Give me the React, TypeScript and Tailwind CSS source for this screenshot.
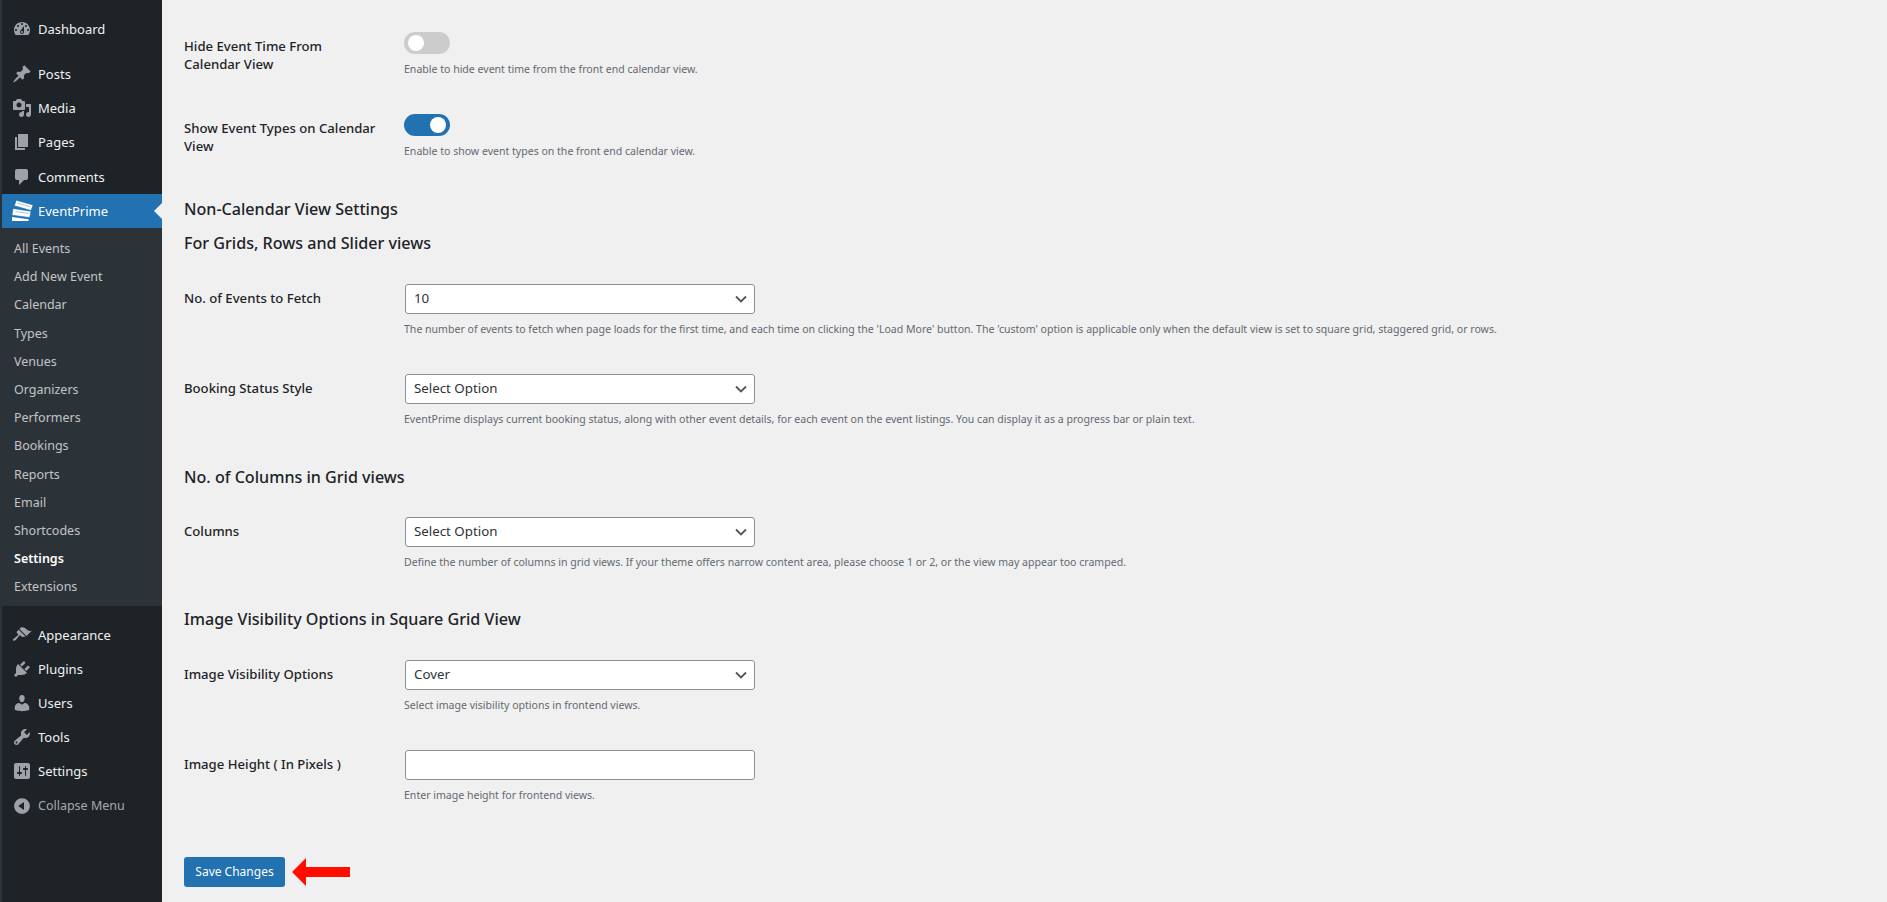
import React from "react";

const P: Record<string, string> = {
  dashboard: "M3.76 16h12.48c1.1-1.37 1.76-3.11 1.76-5 0-4.42-3.58-8-8-8s-8 3.58-8 8c0 1.89.66 3.63 1.76 5zM10 4c.55 0 1 .45 1 1s-.45 1-1 1-1-.45-1-1 .45-1 1-1zM6 6c.55 0 1 .45 1 1s-.45 1-1 1-1-.45-1-1 .45-1 1-1zm8 0c.55 0 1 .45 1 1s-.45 1-1 1-1-.45-1-1 .45-1 1-1zm-5.37 5.55L12 7v6c0 1.1-.9 2-2 2s-2-.9-2-2c0-.57.24-1.08.63-1.45zM4 10c.55 0 1 .45 1 1s-.45 1-1 1-1-.45-1-1 .45-1 1-1zm12 0c.55 0 1 .45 1 1s-.45 1-1 1-1-.45-1-1 .45-1 1-1zm-5 3c0-.55-.45-1-1-1s-1 .45-1 1 .45 1 1 1 1-.45 1-1z",
  post: "M10.44 3.02l1.82-1.82 6.36 6.35-1.83 1.82c-1.05-.68-2.48-.57-3.41.36l-.75.75c-.92.93-1.04 2.35-.35 3.41l-1.83 1.82-2.41-2.41-2.8 2.79c-.42.42-3.38 2.71-3.8 2.29s1.86-3.39 2.28-3.81l2.79-2.79L4.1 9.36l1.83-1.82c1.05.69 2.48.57 3.4-.36l.75-.75c.93-.92 1.05-2.35.36-3.41z",
  media: "M13 11V4c0-.55-.45-1-1-1h-1.67L9 1H5L3.67 3H2c-.55 0-1 .45-1 1v7c0 .55.45 1 1 1h10c.55 0 1-.45 1-1zM7 4.5c1.38 0 2.5 1.12 2.5 2.5S8.38 9.5 7 9.5 4.5 8.38 4.5 7 5.62 4.5 7 4.5zM14 6h5v10.5c0 1.38-1.12 2.5-2.5 2.5S14 17.88 14 16.5s1.12-2.5 2.5-2.5c.17 0 .34.02.5.05V9h-3V6zm-4 8.05V13h2v3.5c0 1.38-1.12 2.5-2.5 2.5S7 17.88 7 16.5 8.12 14 9.5 14c.17 0 .34.02.5.05z",
  page: "M6 15V2h10v13H6zm-1 1h8v2H3V5h2v11z",
  comments: "M5 2h9c1.1 0 2 .9 2 2v7c0 1.1-.9 2-2 2h-2l-5 5v-5H5c-1.1 0-2-.9-2-2V4c0-1.1.9-2 2-2z",
  appearance: "M14.48 11.06L7.41 3.99l1.5-1.5c.5-.56 2.3-.47 3.51.32 1.21.8 1.43 1.28 2.91 2.1 1.18.64 2.45 1.26 4.45.85zm-.71.71L6.7 4.7 4.93 6.47c-.39.39-.39 1.02 0 1.41l1.06 1.06c.39.39.39 1.03 0 1.42-.6.6-1.43 1.11-2.21 1.69-.35.26-.7.53-1.01.84C1.43 13.23.4 14.66 1.2 15.46c.8.79 2.22-.23 3.56-1.57.31-.31.58-.66.85-1.02.57-.78 1.08-1.61 1.69-2.21.39-.39 1.02-.39 1.41 0l1.06 1.06c.39.39 1.02.39 1.41 0z",
  plugins: "M13.11 4.36L9.87 7.6 8 5.73l3.24-3.24c.35-.34 1.05-.2 1.56.32.52.51.66 1.21.31 1.55zm-8 1.77l.91-1.12 9.01 9.01-1.19.84c-.71.71-2.63 1.16-3.82 1.16H6.14L4.9 17.26c-.59.59-1.54.59-2.12 0-.59-.58-.59-1.53 0-2.12l1.24-1.24v-3.88c0-1.13.4-3.19 1.09-3.89zm7.26 3.97l3.24-3.24c.34-.35 1.04-.21 1.55.31.52.51.66 1.21.31 1.55l-3.24 3.25z",
  users: "M10 9.25c-2.27 0-2.73-3.44-2.73-3.44C7 4.02 7.82 2 9.97 2c2.16 0 2.98 2.02 2.71 3.81 0 0-.41 3.44-2.68 3.44zm0 2.57L12.72 10c2.39 0 4.52 2.33 4.52 4.53v2.49s-3.65 1.13-7.24 1.13c-3.65 0-7.24-1.13-7.24-1.13v-2.49c0-2.25 1.94-4.48 4.47-4.48z",
  tools: "M16.68 9.77c-1.34 1.34-3.3 1.67-4.95.99l-5.41 6.52c-.99.99-2.59.99-3.58 0s-.99-2.59 0-3.57l6.52-5.42c-.68-1.65-.35-3.61.99-4.95 1.28-1.28 3.12-1.62 4.72-1.06l-2.89 2.89 2.82 2.82 2.86-2.87c.53 1.58.18 3.39-1.08 4.65zM3.81 16.21c.4.39 1.04.39 1.43 0 .4-.4.4-1.04 0-1.43-.39-.4-1.03-.4-1.43 0-.39.39-.39 1.03 0 1.43z",
  settings: "M18 16V4c0-1.1-.9-2-2-2H4c-1.1 0-2 .9-2 2v12c0 1.1.9 2 2 2h12c1.1 0 2-.9 2-2zM8 11h1c.55 0 1 .45 1 1s-.45 1-1 1H8v1.5c0 .28-.22.5-.5.5s-.5-.22-.5-.5V13H6c-.55 0-1-.45-1-1s.45-1 1-1h1V5.5c0-.28.22-.5.5-.5s.5.22.5.5V11zm5-2h-1c-.55 0-1-.45-1-1s.45-1 1-1h1V5.5c0-.28.22-.5.5-.5s.5.22.5.5V7h1c.55 0 1 .45 1 1s-.45 1-1 1h-1v5.5c0 .28-.22.5-.5.5s-.5-.22-.5-.5V9z",
  collapse: "M10 2.16c4.33 0 7.84 3.51 7.84 7.84s-3.51 7.84-7.84 7.84S2.16 14.33 2.16 10 5.71 2.16 10 2.16zm2 11.72V6.12L6.18 9.97z",
};

function Icon({ name }: { name: string }) {
  return (
    <svg viewBox="0 0 20 20" className="w-5 h-5 fill-[#9ca2a7] shrink-0">
      <path d={P[name]} />
    </svg>
  );
}

function Ticket() {
  return (
    <svg viewBox="0 0 21 21" className="w-[21px] h-[21px] shrink-0">
      <path d="M0 17 L16.7 19.2 L16.5 21 L0 21 Z" fill="#fff" />
      <path d="M1 8.5 L19 11.2 L17.7 17.6 L0 15.2 Z" fill="#fff" stroke="#2271b1" strokeWidth="0.6" />
      <path d="M4.3 0.3 L21 5 L19 10.6 L2.3 5.7 Z" fill="#fff" stroke="#2271b1" strokeWidth="0.6" />
      <path d="M5 3 L18.5 6.8" stroke="#7fb0d6" strokeWidth="0.7" fill="none" />
      <path d="M3.5 11.5 L16.5 13.5" stroke="#7fb0d6" strokeWidth="0.7" fill="none" />
    </svg>
  );
}

function Item({ name, label, cls }: { name: string; label: string; cls: string }) {
  return (
    <div className={`flex items-center pl-[10px] gap-[6px] text-[#f0f0f1] ${cls}`}>
      <Icon name={name} />
      <span>{label}</span>
    </div>
  );
}

const sub = ["All Events", "Add New Event", "Calendar", "Types", "Venues", "Organizers", "Performers", "Bookings", "Reports", "Email", "Shortcodes", "Settings", "Extensions"];

function Sidebar() {
  return (
    <aside className="w-[162px] shrink-0 bg-[#1d2327] border-l-2 border-[#2c3338] text-[13px] leading-[18px]">
      <Item name="dashboard" label="Dashboard" cls="h-[34.4px] mt-[12px]" />
      <Item name="post" label="Posts" cls="h-[34.4px] mt-[10px]" />
      <Item name="media" label="Media" cls="h-[34.4px]" />
      <Item name="page" label="Pages" cls="h-[34.4px]" />
      <Item name="comments" label="Comments" cls="h-[34.4px]" />
      <div className="relative flex items-center h-[34px] pl-[10px] gap-[5px] bg-[#2271b1] text-white">
        <Ticket />
        <span>EventPrime</span>
        <span className="absolute right-0 top-[9px] border-y-[8px] border-r-[8px] border-y-transparent border-r-[#f0f0f1]" />
      </div>
      <div className="bg-[#2c3338] pt-[7px] h-[378px] text-[12.5px]">
        {sub.map((s) => (
          <div key={s} className={`h-[28.2px] pl-[12px] flex items-center ${s === "Settings" ? "text-white font-semibold" : "text-[#c3c4c7]"}`}>{s}</div>
        ))}
      </div>
      <Item name="appearance" label="Appearance" cls="h-[34px] mt-[12px]" />
      <Item name="plugins" label="Plugins" cls="h-[34px]" />
      <Item name="users" label="Users" cls="h-[34px]" />
      <Item name="tools" label="Tools" cls="h-[34px]" />
      <Item name="settings" label="Settings" cls="h-[34px]" />
      <div className="flex items-center h-[34px] mt-[1.5px] pl-[10px] gap-[6px] text-[#a7aaad] text-[12.5px]">
        <Icon name="collapse" />
        <span>Collapse Menu</span>
      </div>
    </aside>
  );
}

function Toggle({ on }: { on?: boolean }) {
  return (
    <div className={`w-[46px] h-[22px] rounded-full flex items-center px-[4px] ${on ? "bg-[#2271b1] justify-end" : "bg-[#ccc] justify-start"}`}>
      <span className="w-4 h-4 rounded-full bg-white" />
    </div>
  );
}

function Select({ value }: { value: string }) {
  return (
    <div className="ml-[1px] w-[350px] h-[30px] mb-[1px] bg-white border border-[#8c8f94] rounded-[3px] flex items-center justify-between pl-[8px] pr-[5px] text-[13.3px] text-[#2c3338]">
      <span>{value}</span>
      <svg viewBox="0 0 16 16" className="w-4 h-4" fill="none" stroke="#50575e" strokeWidth="1.8"><path d="M3 5.5 L8 10.5 L13 5.5" /></svg>
    </div>
  );
}

function Row({ label, desc, h, children }: { label: React.ReactNode; desc: string; h: string; children: React.ReactNode }) {
  return (
    <div className={`flex ${h}`}>
      <div className="w-[220px] shrink-0 pr-[20px] pt-[5px] text-[13.15px] leading-[18px] font-medium text-[#1d2327]">{label}</div>
      <div>
        {children}
        <p className="mt-[7px] text-[10.55px] leading-[16px] text-[#646970]">{desc}</p>
      </div>
    </div>
  );
}

function Heading({ children, cls }: { children: React.ReactNode; cls: string }) {
  return <h2 className={`text-[16.1px] leading-[24px] font-medium text-[#1d2327] ${cls}`}>{children}</h2>;
}

export default function App() {
  return (
    <div className="flex w-[1887px] h-[902px] overflow-hidden bg-[#f0f0f1] font-['Noto_Sans','Open_Sans',sans-serif]">
      <Sidebar />
      <main className="flex-1 pl-[22px] pt-[32px]">
        <Row h="h-[82px]" label={<>Hide Event Time From<br />Calendar View</>} desc="Enable to hide event time from the front end calendar view."><Toggle /></Row>
        <Row h="h-[83px]" label={<>Show Event Types on Calendar<br />View</>} desc="Enable to show event types on the front end calendar view."><Toggle on /></Row>
        <Heading cls="mb-[10px]">Non-Calendar View Settings</Heading>
        <Heading cls="mb-[29px]">For Grids, Rows and Slider views</Heading>
        <Row h="h-[90px]" label="No. of Events to Fetch" desc="The number of events to fetch when page loads for the first time, and each time on clicking the 'Load More' button. The 'custom' option is applicable only when the default view is set to square grid, staggered grid, or rows."><Select value="10" /></Row>
        <Row h="h-[91px]" label="Booking Status Style" desc="EventPrime displays current booking status, along with other event details, for each event on the event listings. You can display it as a progress bar or plain text."><Select value="Select Option" /></Row>
        <Heading cls="mb-[28px]">No. of Columns in Grid views</Heading>
        <Row h="h-[90px]" label="Columns" desc="Define the number of columns in grid views. If your theme offers narrow content area, please choose 1 or 2, or the view may appear too cramped."><Select value="Select Option" /></Row>
        <Heading cls="mb-[29px]">Image Visibility Options in Square Grid View</Heading>
        <Row h="h-[90px]" label="Image Visibility Options" desc="Select image visibility options in frontend views."><Select value="Cover" /></Row>
        <Row h="h-[107px]" label="Image Height ( In Pixels )" desc="Enter image height for frontend views.">
          <div className="ml-[1px] w-[350px] h-[30px] mb-[1px] bg-white border border-[#8c8f94] rounded-[3px]" />
        </Row>
        <div className="flex items-center gap-[7px]">
          <button className="w-[101px] h-[30px] bg-[#2271b1] rounded-[3px] text-white text-[12px]">Save Changes</button>
          <svg viewBox="0 0 58 30" className="w-[58px] h-[30px]"><path d="M0 15 L14 1 V10 H58 V20 H14 V29 Z" fill="#ff0d00" /></svg>
        </div>
      </main>
    </div>
  );
}
